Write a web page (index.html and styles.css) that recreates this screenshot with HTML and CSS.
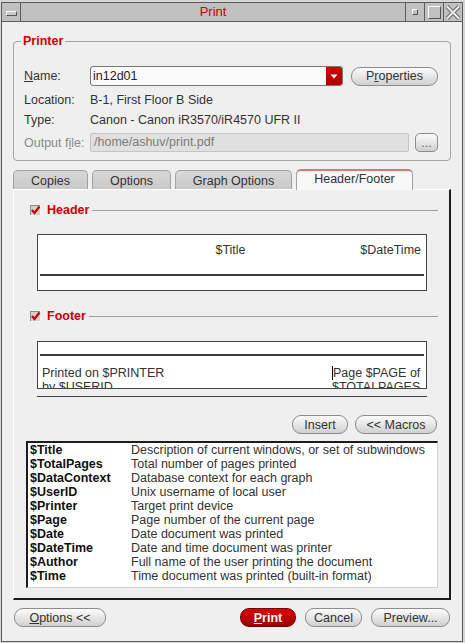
FILE: index.html
```html
<!DOCTYPE html>
<html>
<head>
<meta charset="utf-8">
<title>Print</title>
<link rel="stylesheet" href="styles.css">
</head>
<body>
<div class="window">
  <div class="titlebar">
    <div class="tb-cell tb-menu"><span class="menu-glyph"></span></div>
    <div class="tb-title">Print</div>
    <div class="tb-cell"><span class="min-glyph"></span></div>
    <div class="tb-cell"><span class="max-glyph"></span></div>
    <div class="tb-cell tb-last">
      <svg width="16" height="15" viewBox="0 0 16 15"><path d="M2 1.5 L14 13.5 M14 1.5 L2 13.5" stroke="#6a6a6a" stroke-width="4" fill="none"/><path d="M2 1.5 L14 13.5 M14 1.5 L2 13.5" stroke="#ececec" stroke-width="2" fill="none"/></svg>
    </div>
  </div>
  <div class="content">
    <fieldset class="group">
      <legend>Printer</legend>
      <div class="row row-name">
        <span class="lbl"><u>N</u>ame:</span>
        <div class="combo">
          <span class="combo-text">in12d01</span>
          <span class="combo-arrow"><svg width="8" height="5" viewBox="0 0 8 5"><path d="M0.5 0.5 H7.5 L4 4.5 Z" fill="#fff"/></svg></span>
        </div>
        <div class="btn btn-props">P<u>r</u>operties</div>
      </div>
      <div class="row row-loc"><span class="lbl">Location:</span><span class="val">B-1, First Floor B Side</span></div>
      <div class="row row-type"><span class="lbl">Type:</span><span class="val">Canon - Canon iR3570/iR4570 UFR II</span></div>
      <div class="row row-out">
        <span class="lbl dis">Output f<u>i</u>le:</span>
        <div class="input-dis">/home/ashuv/print.pdf</div>
        <div class="btn btn-dots">...</div>
      </div>
    </fieldset>

    <div class="tabs">
      <div class="tab tab-copies">Copies</div>
      <div class="tab tab-options">Options</div>
      <div class="tab tab-graph">Graph Options</div>
      <div class="tab tab-hf active">Header/Footer</div>
    </div>

    <div class="panel">
      <div class="sect">
        <svg class="chk" width="11" height="11" viewBox="0 0 11 11"><rect x="0" y="0" width="11" height="11" fill="#f4f4f4"/><rect x="0" y="0" width="10" height="10" fill="#8c8c8c"/><rect x="1" y="1" width="9" height="9" fill="#d2d2d2"/><path d="M2 5 L4.5 8 L9.5 1.5" stroke="#cc0000" stroke-width="2.2" fill="none"/></svg>
        <span class="sect-title">Header</span>
        <span class="sect-line"></span>
      </div>
      <div class="preview preview-header">
        <div class="pv-row">
          <span class="pv-left"></span>
          <span class="pv-center">$Title</span>
          <span class="pv-right">$DateTime</span>
        </div>
        <div class="pv-rule pv-rule-head"></div>
      </div>

      <div class="sect sect-footer">
        <svg class="chk" width="11" height="11" viewBox="0 0 11 11"><rect x="0" y="0" width="11" height="11" fill="#f4f4f4"/><rect x="0" y="0" width="10" height="10" fill="#8c8c8c"/><rect x="1" y="1" width="9" height="9" fill="#d2d2d2"/><path d="M2 5 L4.5 8 L9.5 1.5" stroke="#cc0000" stroke-width="2.2" fill="none"/></svg>
        <span class="sect-title">Footer</span>
        <span class="sect-line"></span>
      </div>
      <div class="preview preview-footer">
        <div class="pv-rule pv-rule-foot"></div>
        <div class="pv-foot-row">
          <span class="pv-foot-left">Printed on $PRINTER by $USERID</span>
          <span class="pv-foot-right"><span class="cursor"></span>Page $PAGE of $TOTALPAGES</span>
        </div>
      </div>
      <div class="sep"></div>

      <div class="macro-btns">
        <div class="btn btn-insert">Insert</div>
        <div class="btn btn-macros">&lt;&lt; Macros</div>
      </div>

      <div class="macros">
        <span class="m-name">$Title</span><span class="m-desc">Description of current windows, or set of subwindows</span>
        <span class="m-name">$TotalPages</span><span class="m-desc">Total number of pages printed</span>
        <span class="m-name">$DataContext</span><span class="m-desc">Database context for each graph</span>
        <span class="m-name">$UserID</span><span class="m-desc">Unix username of local user</span>
        <span class="m-name">$Printer</span><span class="m-desc">Target print device</span>
        <span class="m-name">$Page</span><span class="m-desc">Page number of the current page</span>
        <span class="m-name">$Date</span><span class="m-desc">Date document was printed</span>
        <span class="m-name">$DateTime</span><span class="m-desc">Date and time document was printer</span>
        <span class="m-name">$Author</span><span class="m-desc">Full name of the user printing the document</span>
        <span class="m-name">$Time</span><span class="m-desc">Time document was printed (built-in format)</span>
      </div>
    </div>

    <div class="actions">
      <div class="btn btn-opts"><u>O</u>ptions &lt;&lt;</div>
      <span class="spacer"></span>
      <div class="btn btn-print"><u>P</u>rint</div>
      <div class="btn btn-cancel">Cancel</div>
      <div class="btn btn-preview">Preview...</div>
    </div>
  </div>
</div>
</body>
</html>
```

FILE: styles.css
```css
* { box-sizing: border-box; }

html, body {
  margin: 0;
  padding: 0;
  background: #d6d6d6;
  font-family: "Liberation Sans", Arial, sans-serif;
  font-size: 12.5px;
  color: #333;
}

.window {
  margin: 2px 0 0 1px;
  width: 462px;
  height: 640px;
  border: 1px solid #5c5c5c;
  background: #efefef;
  display: flex;
  flex-direction: column;
}

/* Title bar */
.titlebar {
  height: 19px;
  flex: none;
  display: flex;
  background: #c0c0c0;
  border-bottom: 1px solid #5c5c5c;
}
.tb-cell {
  width: 19px;
  flex: none;
  border-right: 1px solid #5c5c5c;
  display: flex;
  align-items: center;
  justify-content: center;
}
.tb-last { border-right: none; width: 18px; }
.tb-title {
  flex: 1;
  text-align: center;
  color: #cc0000;
  font-size: 13px;
  line-height: 18px;
  border-right: 1px solid #5c5c5c;
}
.menu-glyph {
  width: 11px;
  height: 5px;
  border-top: 1px solid #fafafa;
  border-left: 1px solid #fafafa;
  border-right: 1px solid #555;
  border-bottom: 1px solid #555;
  background: #c8c8c8;
  margin-top: 2px;
}
.min-glyph {
  width: 6px;
  height: 6px;
  border-top: 1px solid #fafafa;
  border-left: 1px solid #fafafa;
  border-right: 1px solid #555;
  border-bottom: 1px solid #555;
}
.max-glyph {
  width: 13px;
  height: 13px;
  border-top: 1px solid #fafafa;
  border-left: 1px solid #fafafa;
  border-right: 1px solid #555;
  border-bottom: 1px solid #555;
}

/* Content */
.content {
  flex: 1;
  padding: 12px 11px 0 11px;
  display: flex;
  flex-direction: column;
}

.group {
  margin: 0;
  padding: 18px 11px 8px 10px;
  border: 1px solid #a4a4a4;
  border-radius: 4px;
}
.group legend {
  margin-left: -3px;
  padding: 0 2px;
  line-height: 14px;
  font-weight: bold;
  font-size: 12.5px;
  color: #cc0000;
}

.row {
  display: flex;
  align-items: center;
}
.lbl {
  width: 66px;
  flex: none;
  white-space: nowrap;
}
.lbl.dis { color: #8a8a8a; }
.row-name { height: 20px; }
.row-loc { height: 20px; margin-top: 4px; }
.row-type { height: 19px; }
.row-out { height: 19px; margin-top: 4px; }

.combo {
  width: 253px;
  height: 20px;
  display: flex;
  border: 1px solid #7a7a7a;
  border-radius: 3px;
  background: #fbfbfb;
  overflow: hidden;
}
.combo-text {
  flex: 1;
  padding-left: 2px;
  line-height: 18px;
  color: #222;
}
.combo-arrow {
  width: 16px;
  background: linear-gradient(#d40000, #a80000);
  display: flex;
  align-items: center;
  justify-content: center;
}

.btn {
  display: flex;
  align-items: center;
  justify-content: center;
  height: 19px;
  border: 1px solid #8c8c8c;
  border-radius: 9px;
  background: linear-gradient(#fbfbfb, #e2e2e2 60%, #d0d0d0);
  color: #333;
  font-size: 12.5px;
  white-space: nowrap;
}
.btn-props { width: 87px; margin-left: 8px; }

.input-dis {
  width: 319px;
  height: 19px;
  border: 1px solid #c4c4c4;
  border-radius: 2px;
  background: #e0e0e0;
  color: #7c7c7c;
  padding-left: 3px;
  line-height: 17px;
}
.btn-dots { width: 23px; margin-left: 6px; border-radius: 5px; color: #666; }

/* Tabs */
.tabs {
  margin-top: 8px;
  height: 20px;
  display: flex;
  align-items: flex-end;
  gap: 4px;
  position: relative;
  z-index: 1;
}
.tab {
  height: 19px;
  border: 1px solid #a2a2a2;
  border-bottom: none;
  border-radius: 5px 5px 0 0;
  background: linear-gradient(#d8d8d8, #c9c9c9);
  text-align: center;
  line-height: 20px;
  font-size: 12.5px;
  color: #333;
}
.tab-copies { width: 75px; }
.tab-options { width: 79px; }
.tab-graph { width: 117px; }
.tab-hf { width: 117px; }
.tab.active {
  height: 21px;
  margin-bottom: -1px;
  background: #f8f8f8;
  border-top: 2px solid #e07474;
  line-height: 17px;
}

.panel {
  width: 438px;
  background: #efefef;
  border-top: 1px solid #ffffff;
  border-left: 1px solid #ffffff;
  border-right: 2px solid #1c1c1c;
  border-bottom: 2px solid #1c1c1c;
  padding: 13px 11px 10px 12px;
  display: flex;
  flex-direction: column;
}

.sect {
  display: flex;
  align-items: center;
  height: 14px;
  margin-left: 4px;
}
.chk { flex: none; }
.sect-title {
  margin-left: 6px;
  color: #cc0000;
  font-weight: bold;
  font-size: 12.5px;
}
.sect-line {
  flex: 1;
  height: 1px;
  background: #a0a0a0;
  margin-left: 3px;
}
.sect-footer { margin-top: 18px; }

.preview {
  margin: 17px 11px 0 11px;
  background: #ffffff;
  border: 1px solid #444;
  overflow: hidden;
}
.preview-header {
  height: 57px;
  padding: 8px 2px 0 2px;
}
.pv-row {
  display: grid;
  grid-template-columns: 1fr 1fr 1fr;
  line-height: 14px;
  padding-right: 3px;
}
.pv-center { text-align: center; }
.pv-right { text-align: right; }
.pv-rule {
  height: 2px;
  background: #3c3c3c;
}
.pv-rule-head { margin-top: 17px; }

.preview-footer {
  margin-top: 18px;
  height: 48px;
  padding: 12px 2px 0 2px;
}
.pv-foot-row {
  margin-top: 10px;
  display: flex;
  justify-content: space-between;
  line-height: 14px;
  padding: 0 1px 0 2px;
}
.pv-foot-left { width: 135px; }
.pv-foot-right { width: 91px; }
.cursor {
  display: inline-block;
  width: 1px;
  height: 14px;
  background: #000;
  vertical-align: top;
}

.sep {
  margin: 7px 11px 0 11px;
  height: 1px;
  background: #444;
}

.macro-btns {
  margin-top: 18px;
  display: flex;
  justify-content: flex-end;
  gap: 7px;
  margin-right: 1px;
}
.btn-insert { width: 56px; }
.btn-macros { width: 82px; }

.macros {
  margin-top: 7px;
  background: #ffffff;
  border-top: 2px solid #1c1c1c;
  border-left: 2px solid #1c1c1c;
  border-right: 1px solid #d0d0d0;
  border-bottom: 1px solid #d0d0d0;
  padding: 0 0 4px 2px;
  display: grid;
  grid-template-columns: 101px 1fr;
  line-height: 14px;
  font-size: 12.5px;
}
.m-name { font-weight: bold; color: #111; }
.m-desc { color: #333; white-space: nowrap; }

.actions {
  margin-top: 8px;
  display: flex;
  align-items: center;
  padding: 0 1px;
  gap: 9px;
}
.spacer { flex: 1; }
.btn-opts { width: 92px; }
.btn-print {
  width: 56px;
  background: linear-gradient(#e00000, #b40000 60%, #a00000);
  border-color: #7a0000;
  color: #fff;
  font-weight: bold;
}
.btn-cancel { width: 57px; }
.btn-preview { width: 79px; }
```
